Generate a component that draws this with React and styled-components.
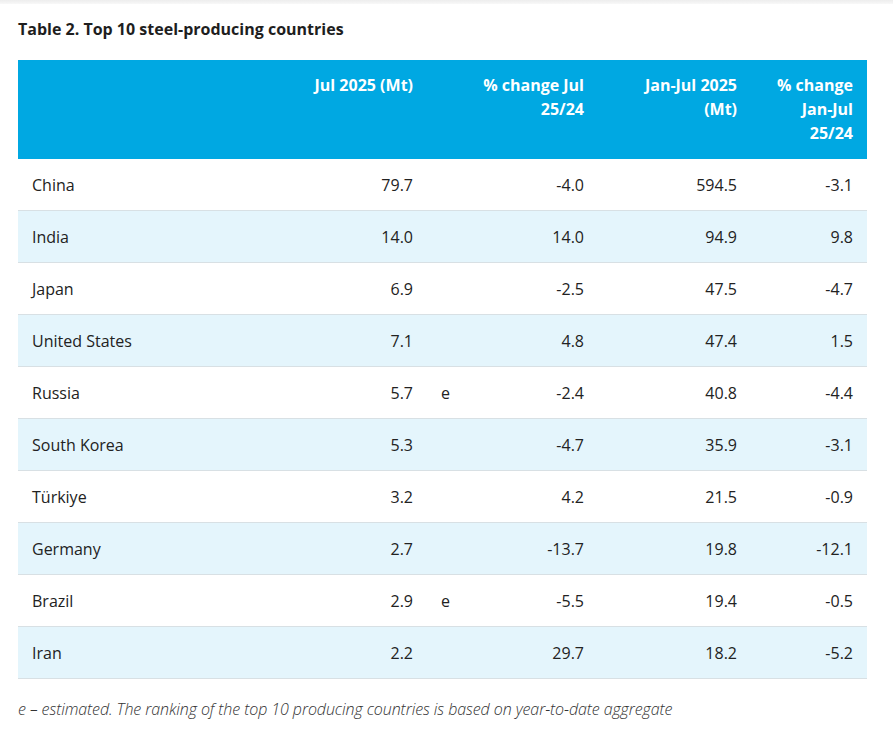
import React from 'react';
import styled, { createGlobalStyle } from 'styled-components';

const GlobalStyle = createGlobalStyle`
  body {
    margin: 0;
    background: #ffffff;
    font-family: 'Open Sans', 'Liberation Sans', sans-serif;
    color: #222222;
  }
`;

const TopStrip = styled.div`
  height: 4px;
  background: linear-gradient(#ededed, #f8f8f8);
`;

const Page = styled.div`
  padding: 13px 26px 0 18px;
`;

const Title = styled.h3`
  margin: 0 0 19px;
  font-size: 16px;
  line-height: 24px;
  font-weight: 700;
  color: #1e1e1e;
`;

const Table = styled.table`
  width: 849px;
  border-collapse: collapse;
  table-layout: fixed;
  font-size: 16px;
`;

const HeadCell = styled.th`
  background: #00a8e2;
  color: #ffffff;
  font-size: 16px;
  font-weight: 700;
  line-height: 24px;
  padding: 13px 14px 14px;
  text-align: ${(p) => (p.$left ? 'left' : 'right')};
  vertical-align: top;
`;

const Row = styled.tr`
  background: ${(p) => (p.$alt ? '#e4f5fc' : '#ffffff')};
  border-bottom: 1px solid #d8e0e4;
`;

const Cell = styled.td`
  padding: 15px 14px 13px;
  line-height: 23px;
  text-align: ${(p) => (p.$left ? 'left' : 'right')};
  color: #222222;
  white-space: nowrap;
`;

const Note = styled.p`
  margin: 18px 0 0;
  font-size: 16px;
  line-height: 24px;
  font-style: italic;
  font-weight: 300;
  letter-spacing: -0.08px;
  color: #333333;
`;

const rows = [
  ['China', '79.7', '', '-4.0', '594.5', '-3.1'],
  ['India', '14.0', '', '14.0', '94.9', '9.8'],
  ['Japan', '6.9', '', '-2.5', '47.5', '-4.7'],
  ['United States', '7.1', '', '4.8', '47.4', '1.5'],
  ['Russia', '5.7', 'e', '-2.4', '40.8', '-4.4'],
  ['South Korea', '5.3', '', '-4.7', '35.9', '-3.1'],
  ['Türkiye', '3.2', '', '4.2', '21.5', '-0.9'],
  ['Germany', '2.7', '', '-13.7', '19.8', '-12.1'],
  ['Brazil', '2.9', 'e', '-5.5', '19.4', '-0.5'],
  ['Iran', '2.2', '', '29.7', '18.2', '-5.2'],
];

export default function App() {
  return (
    <>
      <GlobalStyle />
      <TopStrip />
      <Page>
        <Title>Table 2. Top 10 steel-producing countries</Title>
        <Table>
          <colgroup>
            <col style={{ width: 260 }} />
            <col style={{ width: 149 }} />
            <col style={{ width: 33 }} />
            <col style={{ width: 138 }} />
            <col style={{ width: 153 }} />
            <col style={{ width: 116 }} />
          </colgroup>
          <thead>
            <tr>
              <HeadCell $left></HeadCell>
              <HeadCell>Jul 2025 (Mt)</HeadCell>
              <HeadCell></HeadCell>
              <HeadCell>% change Jul<br />25/24</HeadCell>
              <HeadCell>Jan-Jul 2025<br />(Mt)</HeadCell>
              <HeadCell>% change<br />Jan-Jul<br />25/24</HeadCell>
            </tr>
          </thead>
          <tbody>
            {rows.map((r, i) => (
              <Row key={r[0]} $alt={i % 2 === 1}>
                <Cell $left>{r[0]}</Cell>
                <Cell>{r[1]}</Cell>
                <Cell $left>{r[2]}</Cell>
                <Cell>{r[3]}</Cell>
                <Cell>{r[4]}</Cell>
                <Cell>{r[5]}</Cell>
              </Row>
            ))}
          </tbody>
        </Table>
        <Note>e – estimated. The ranking of the top 10 producing countries is based on year-to-date aggregate</Note>
      </Page>
    </>
  );
}
